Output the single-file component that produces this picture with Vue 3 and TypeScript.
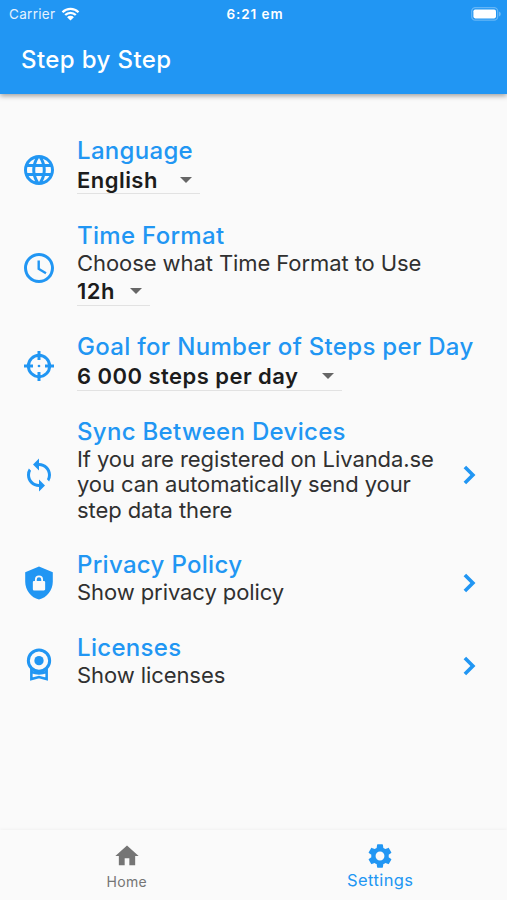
<script setup lang="ts">
import { ref } from 'vue'

interface SettingRow {
  id: string
  title: string
  text?: string[]
  value?: string
  link?: boolean
}

const rows: SettingRow[] = [
  { id: 'language', title: 'Language', value: 'English' },
  { id: 'time', title: 'Time Format', text: ['Choose what Time Format to Use'], value: '12h' },
  { id: 'goal', title: 'Goal for Number of Steps per Day', value: '6 000 steps per day' },
  {
    id: 'sync',
    title: 'Sync Between Devices',
    text: ['If you are registered on Livanda.se', 'you can automatically send your', 'step data there'],
    link: true,
  },
  { id: 'privacy', title: 'Privacy Policy', text: ['Show privacy policy'], link: true },
  { id: 'licenses', title: 'Licenses', text: ['Show licenses'], link: true },
]

const activeTab = ref<'home' | 'settings'>('settings')
</script>

<template>
  <div class="screen">
    <header class="header">
      <div class="status">
        <div class="carrier">
          <span>Carrier</span>
          <svg class="wifi" viewBox="0 0 18 14">
            <path d="M1 5.2a11.4 11.4 0 0 1 16 0M3.7 8a7.5 7.5 0 0 1 10.6 0" fill="none" stroke="#fff" stroke-width="2.3" />
            <path d="M9 13.6 5.6 10.2a4.8 4.8 0 0 1 6.8 0z" fill="#fff" />
          </svg>
        </div>
        <div class="clock">6:21 em</div>
        <div class="power">
          <svg class="battery" viewBox="0 0 30 14">
            <rect x=".7" y=".6" width="26" height="12.6" rx="3.6" fill="none" stroke="#fff" stroke-opacity=".3" stroke-width="1.3" />
            <rect x="2.4" y="2.4" width="22.6" height="9" rx="1.8" fill="#fff" />
            <path d="M28 4.6q1.8.8 1.8 2.4T28 9.4z" fill="#fff" fill-opacity=".35" />
          </svg>
        </div>
      </div>
      <h1 class="app-title">Step by Step</h1>
    </header>

    <main class="list">
      <section v-for="row in rows" :key="row.id" class="row">
        <div class="lead">
          <svg class="icon" viewBox="0 0 24 24">
            <path
              v-if="row.id === 'language'"
              d="M11.99 2C6.47 2 2 6.48 2 12s4.47 10 9.99 10C17.52 22 22 17.52 22 12S17.52 2 11.99 2zm6.93 6h-2.95c-.32-1.25-.78-2.45-1.38-3.56 1.84.63 3.37 1.91 4.33 3.56zM12 4.04c.83 1.2 1.48 2.53 1.91 3.96h-3.82c.43-1.43 1.08-2.76 1.91-3.96zM4.26 14C4.1 13.36 4 12.69 4 12s.1-1.36.26-2h3.38c-.08.66-.14 1.32-.14 2s.06 1.34.14 2H4.26zm.82 2h2.95c.32 1.25.78 2.45 1.38 3.56-1.84-.63-3.37-1.9-4.33-3.56zm2.95-8H5.08c.96-1.66 2.49-2.93 4.33-3.56C8.81 5.55 8.35 6.75 8.03 8zM12 19.96c-.83-1.2-1.48-2.53-1.91-3.96h3.82c-.43 1.43-1.08 2.76-1.91 3.96zM14.34 14H9.66c-.09-.66-.16-1.32-.16-2s.07-1.35.16-2h4.68c.09.65.16 1.32.16 2s-.07 1.34-.16 2zm.25 5.56c.6-1.11 1.06-2.31 1.38-3.56h2.95c-.96 1.65-2.49 2.93-4.33 3.56zM16.36 14c.08-.66.14-1.32.14-2s-.06-1.34-.14-2h3.38c.16.64.26 1.31.26 2s-.1 1.36-.26 2h-3.38z"
            />
            <path
              v-else-if="row.id === 'time'"
              d="M11.99 2C6.47 2 2 6.48 2 12s4.47 10 9.99 10C17.52 22 22 17.52 22 12S17.52 2 11.99 2zM12 20a8 8 0 1 1 0-16 8 8 0 0 1 0 16zM12.6 7H11v6l5.25 3.15.8-1.3-4.45-2.65z"
            />
            <g v-else-if="row.id === 'goal'" fill="none" stroke="currentColor" stroke-width="2">
              <circle cx="12" cy="12" r="7.1" />
              <path d="M12 2v6M12 16v6M2 12h6M16 12h6" />
              <circle cx="12" cy="12" r=".9" fill="currentColor" stroke="none" />
            </g>
            <path
              v-else-if="row.id === 'sync'"
              d="M12 4V1L8 5l4 4V6c3.31 0 6 2.69 6 6 0 1.01-.25 1.97-.7 2.8l1.46 1.46A7.93 7.93 0 0 0 20 12c0-4.42-3.58-8-8-8zm0 14c-3.31 0-6-2.69-6-6 0-1.01.25-1.97.7-2.8L5.24 7.74A7.93 7.93 0 0 0 4 12c0 4.42 3.58 8 8 8v3l4-4-4-4v3z"
            />
            <path
              v-else-if="row.id === 'privacy'"
              fill-rule="evenodd"
              d="M12 1 2.8 4.9v6.2C2.8 16.6 6.7 21.7 12 23c5.3-1.3 9.2-6.4 9.2-11.9V4.9zM8.7 10.6h.6V9.7a2.7 2.7 0 0 1 5.4 0v.9h.6c.5 0 .8.4.8.8v4.8c0 .5-.4.8-.8.8H8.7a.8.8 0 0 1-.8-.8v-4.8c0-.5.4-.8.8-.8zm1.8 0h3V9.7a1.5 1.5 0 0 0-3 0z"
            />
            <g v-else fill="none" stroke="currentColor" stroke-width="2">
              <circle cx="12" cy="9.1" r="7.1" />
              <circle cx="12" cy="9.1" r="3.1" fill="currentColor" stroke="none" />
              <path d="M6.9 14v7.4L12 20l5.1 1.4V14M7 16.7q5 1.8 10 0" stroke-width="1.7" />
            </g>
          </svg>
        </div>
        <div class="body">
          <h2 class="title">{{ row.title }}</h2>
          <p v-if="row.text" class="text">
            <span v-for="line in row.text" :key="line" class="line">{{ line }}</span>
          </p>
          <button v-if="row.value" type="button" class="select" :class="row.id">
            <span>{{ row.value }}</span>
            <svg class="caret" viewBox="0 0 12 6"><path d="M0 0h12L6 6z" /></svg>
          </button>
        </div>
        <svg v-if="row.link" class="chevron" viewBox="0 0 24 24">
          <path d="M8.4 16.5 12.9 12 8.4 7.5 10.1 5.8l6.2 6.2-6.2 6.2z" />
        </svg>
      </section>
    </main>

    <nav class="tabs">
      <button type="button" class="tab" :class="{ active: activeTab === 'home' }" @click="activeTab = 'home'">
        <svg class="tab-icon" viewBox="0 0 24 24"><path d="M10 20v-6h4v6h5v-8h3L12 3 2 12h3v8z" /></svg>
        <span class="tab-label">Home</span>
      </button>
      <button type="button" class="tab" :class="{ active: activeTab === 'settings' }" @click="activeTab = 'settings'">
        <svg class="tab-icon" viewBox="0 0 24 24">
          <path d="M19.43 12.98c.04-.32.07-.64.07-.98s-.03-.66-.07-.98l2.11-1.65c.19-.15.24-.42.12-.64l-2-3.46c-.12-.22-.39-.3-.61-.22l-2.49 1c-.52-.4-1.08-.73-1.69-.98l-.38-2.65A.49.49 0 0 0 14 2h-4c-.25 0-.46.18-.49.42l-.38 2.65c-.61.25-1.17.59-1.69.98l-2.49-1c-.23-.09-.49 0-.61.22l-2 3.46c-.13.22-.07.49.12.64l2.11 1.65c-.04.32-.07.65-.07.98s.03.66.07.98l-2.11 1.65c-.19.15-.24.42-.12.64l2 3.46c.12.22.39.3.61.22l2.49-1c.52.4 1.08.73 1.69.98l.38 2.65c.03.24.24.42.49.42h4c.25 0 .46-.18.49-.42l.38-2.65c.61-.25 1.17-.59 1.69-.98l2.49 1c.23.09.49 0 .61-.22l2-3.46c.12-.22.07-.49-.12-.64zM12 15.8a3.8 3.8 0 1 1 0-7.6 3.8 3.8 0 0 1 0 7.6z" />
        </svg>
        <span class="tab-label">Settings</span>
      </button>
    </nav>
  </div>
</template>

<style>
body {
  margin: 0;
  background: #fafafa;
}
</style>

<style scoped>
.screen {
  display: flex;
  flex-direction: column;
  width: 507px;
  height: 900px;
  overflow: hidden;
  background: #fafafa;
  font-family: Inter, "Liberation Sans", sans-serif;
  color: #303030;
}
button {
  padding: 0;
  border: 0;
  background: none;
  font: inherit;
  color: inherit;
}
.header {
  flex: none;
  height: 94px;
  background: #2196f3;
  color: #fff;
  box-shadow: 0 2px 5px rgba(0, 0, 0, 0.36);
}
.status {
  display: grid;
  grid-template-columns: 1fr auto 1fr;
  height: 27px;
  align-items: center;
  padding: 0 6px 0 9px;
}
.carrier {
  display: flex;
  align-items: center;
  gap: 6px;
  color: #e4f2fe;
  font-size: 13.5px;
  letter-spacing: 0.3px;
}
.wifi {
  width: 19px;
  height: 14px;
}
.clock {
  font-size: 13.5px;
  font-weight: 600;
  letter-spacing: 0.9px;
}
.power {
  display: flex;
  justify-content: flex-end;
}
.battery {
  width: 30px;
  height: 14px;
}
.app-title {
  margin: 17px 0 0 21px;
  font-size: 24px;
  line-height: 32px;
  font-weight: 500;
  letter-spacing: 0.4px;
}
.list {
  flex: 1;
  display: flex;
  flex-direction: column;
  gap: 27px;
  padding: 43px 20px 0;
}
.row {
  display: flex;
  align-items: center;
}
.lead {
  width: 56px;
  padding: 8px 0 0 1px;
  flex: none;
}
.icon,
.chevron {
  display: block;
  width: 36px;
  height: 36px;
  fill: #2196f3;
  color: #2196f3;
}
.body {
  flex: 1;
  white-space: nowrap;
}
.title {
  margin: 0;
  font-size: 24px;
  line-height: 28px;
  font-weight: 500;
  letter-spacing: 0.31px;
  color: #2196f3;
}
.text {
  margin: 1px 0 0;
  padding-bottom: 1px;
  font-size: 22px;
  line-height: 25.5px;
  letter-spacing: -0.08px;
}
.line {
  display: block;
}
.select {
  display: flex;
  align-items: center;
  justify-content: space-between;
  box-sizing: border-box;
  height: 28px;
  margin-top: 2px;
  padding-right: 8px;
  border-bottom: 1px solid #e2e2e2;
  font-size: 22px;
  font-weight: 600;
  letter-spacing: 0.46px;
  color: #1c1c1c;
}
.select.language {
  width: 123px;
  margin: 1px 0;
}
.select.time {
  width: 73px;
  margin-top: 0;
}
.select.goal {
  width: 265px;
}
.caret {
  width: 12px;
  height: 6px;
  fill: #666;
}
.chevron {
  margin: 9px 0 0;
}
.tabs {
  flex: none;
  display: flex;
  height: 70px;
  box-shadow: 0 -1px 3px rgba(0, 0, 0, 0.04);
}
.tab {
  flex: 1;
  display: flex;
  flex-direction: column;
  align-items: center;
  padding-top: 12px;
  color: #757575;
}
.tab-icon {
  width: 28px;
  height: 28px;
  fill: currentColor;
}
.tab-label {
  font-size: 14px;
  line-height: 24px;
  letter-spacing: 0.3px;
}
.tab.active {
  color: #2196f3;
}
.tab.active .tab-label {
  font-size: 16.5px;
  line-height: 21px;
  letter-spacing: 0.4px;
}
</style>
